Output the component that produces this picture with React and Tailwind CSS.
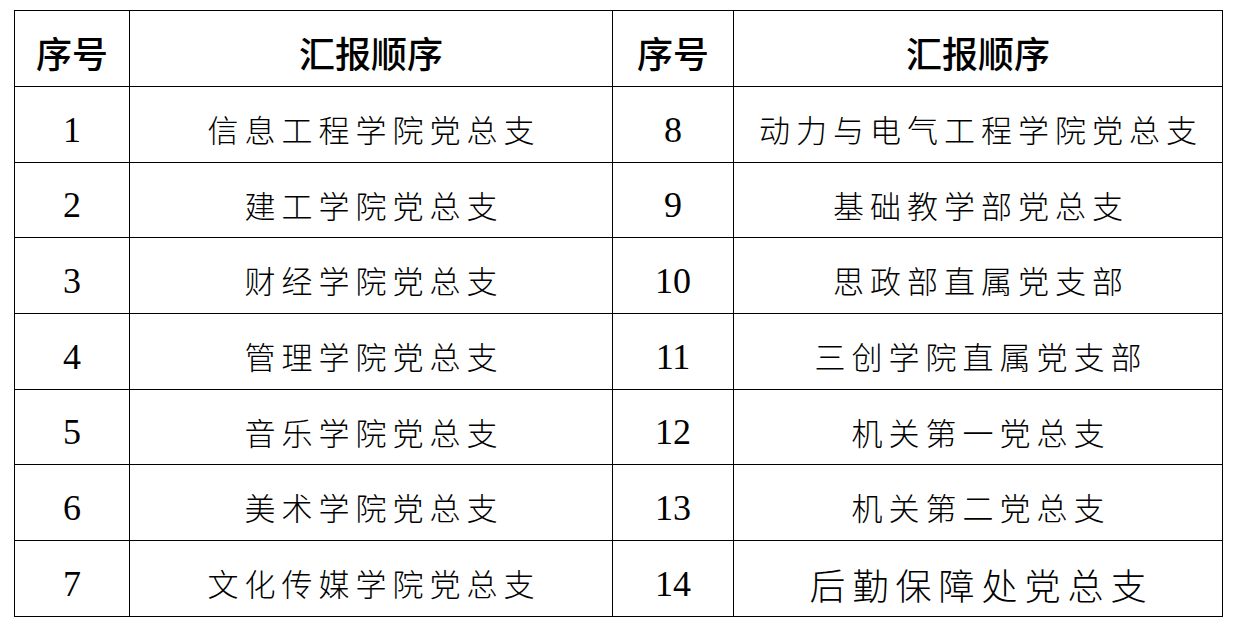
import { Fragment } from "react";

const rows = [
  ["1", "信息工程学院党总支", "8", "动力与电气工程学院党总支"],
  ["2", "建工学院党总支", "9", "基础教学部党总支"],
  ["3", "财经学院党总支", "10", "思政部直属党支部"],
  ["4", "管理学院党总支", "11", "三创学院直属党支部"],
  ["5", "音乐学院党总支", "12", "机关第一党总支"],
  ["6", "美术学院党总支", "13", "机关第二党总支"],
  ["7", "文化传媒学院党总支", "14", "后勤保障处党总支"],
];

const cjk = "font-['Noto_Sans_CJK_SC',sans-serif]";
const num = "font-['Liberation_Serif','Times_New_Roman',serif]";

export default function App() {
  return (
    <div className="w-[1239px] h-[628px] bg-white pl-[14px] pt-[10px]">
      <div className="w-[1209px] grid grid-cols-[114px_482px_120px_488px] grid-rows-[75px_75px_74px_75px_75px_74px_75px_75px] gap-px bg-black border border-black text-black">
        {/* header */}
        <div className={`bg-white flex items-center justify-center pt-[6px] text-[36px] font-medium ${cjk}`}>序号</div>
        <div className={`bg-white flex items-center justify-center pt-[6px] text-[36px] font-medium ${cjk}`}>汇报顺序</div>
        <div className={`bg-white flex items-center justify-center pt-[6px] text-[36px] font-medium ${cjk}`}>序号</div>
        <div className={`bg-white flex items-center justify-center pt-[6px] text-[36px] font-medium ${cjk}`}>汇报顺序</div>

        {rows.map((r) => (
          <Fragment key={r[0]}>
            <div className={`bg-white flex items-center justify-center pt-[10px] text-[36px] ${num}`}>{r[0]}</div>
            <div className={`bg-white flex items-center justify-center pt-[10px] text-[31px] font-light tracking-[6px] ${cjk}`}>
              <span className="mr-[-6px]">{r[1]}</span>
            </div>
            <div className={`bg-white flex items-center justify-center pt-[10px] text-[36px] ${num}`}>{r[2]}</div>
            <div className={`bg-white flex items-center justify-center pt-[10px] font-light ${cjk} ${r[2] === "14" ? "text-[36px] tracking-[7px]" : "text-[31px] tracking-[6px]"}`}>
              <span className={r[2] === "14" ? "mr-[-7px]" : "mr-[-6px]"}>{r[3]}</span>
            </div>
          </Fragment>
        ))}
      </div>
    </div>
  );
}
